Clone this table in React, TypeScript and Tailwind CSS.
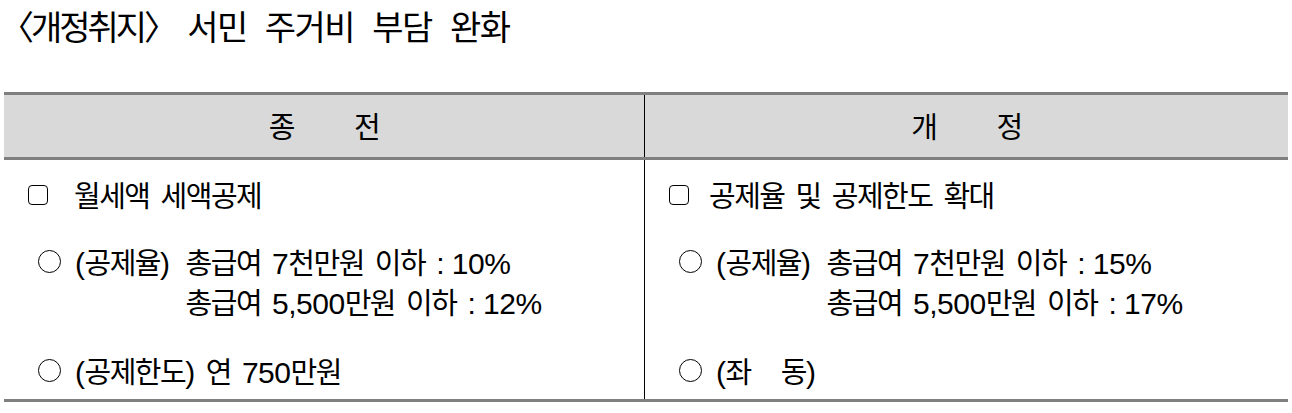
import React from "react";

// latin / digit runs
function N({ children }: { children: React.ReactNode }) {
  return <span className="font-['Liberation_Sans',sans-serif] text-[30px] leading-none tracking-[-0.5px] [word-spacing:0px]">{children}</span>;
}

function Box() {
  return <span className="inline-block w-[20px] h-[20px] border-[1.5px] border-black rounded-[4px] shrink-0" />;
}

function Circle() {
  return <span className="inline-block w-[23px] h-[23px] border-[1.5px] border-black rounded-full shrink-0" />;
}

function Column({ title, rate1, rate2, limit, boxGap }: { title: string; rate1: string; rate2: string; limit: React.ReactNode; boxGap: string }) {
  return (
    <div className="pt-[20px] pb-[12px]">
      <div className={"flex items-center pl-[24px] h-[30px] " + boxGap}>
        <Box />
        <span>{title}</span>
      </div>
      <div className="flex pl-[34px] mt-[34px]">
        <div className="flex items-center h-[34px] gap-[14px]">
          <Circle />
          <span className="leading-[34px]">
            <N>(</N>공제율<N>)</N>
          </span>
        </div>
        <div className="ml-[16px] flex flex-col">
          <span className="h-[34px] leading-[34px]">
            총급여 <N>7</N>천만원 이하 <N>: {rate1}</N>
          </span>
          <span className="h-[34px] leading-[34px] mt-[6px]">
            총급여 <N>5,500</N>만원 이하 <N>: {rate2}</N>
          </span>
        </div>
      </div>
      <div className="flex items-center gap-[14px] pl-[34px] mt-[35px] h-[34px]">
        <Circle />
        <span className="leading-[34px]">{limit}</span>
      </div>
    </div>
  );
}

export default function App() {
  return (
    <div className="w-[1292px] h-[413px] bg-white text-black font-['Noto_Sans_CJK_KR',sans-serif]">
      <h1 className="flex items-baseline pt-[5px] text-[34px] leading-[42px] font-normal">
        <span className="tracking-[-3px]">〈개정취지〉</span>
        <span className="ml-[12px] tracking-[-1.5px] [word-spacing:12px]">서민 주거비 부담 완화</span>
      </h1>
      <div className="mt-[45px] ml-[4px] w-[1284px] border-t-[3px] border-b-[3px] border-[#7f7f7f] text-[29px] tracking-[-1.5px] [word-spacing:6px]">
        <div className="grid grid-cols-[641px_1fr] bg-[#d9d9d9] h-[65px] border-b-[3px] border-[#7f7f7f]">
          <div className="flex items-center justify-center border-r border-black">종<span className="w-[60px]" />전</div>
          <div className="flex items-center justify-center">개<span className="w-[60px]" />정</div>
        </div>
        <div className="grid grid-cols-[641px_1fr]">
          <div className="border-r border-black">
            <Column
              title="월세액 세액공제"
              rate1="10%"
              rate2="12%"
              limit={<><N>(</N>공제한도<N>)</N> 연 <N>750</N>만원</>}
              boxGap="gap-[26px]"
            />
          </div>
          <div>
            <Column
              title="공제율 및 공제한도 확대"
              rate1="15%"
              rate2="17%"
              limit={<><N>(</N>좌<span className="inline-block w-[30px]" />동<N>)</N></>}
              boxGap="gap-[20px]"
            />
          </div>
        </div>
      </div>
    </div>
  );
}
